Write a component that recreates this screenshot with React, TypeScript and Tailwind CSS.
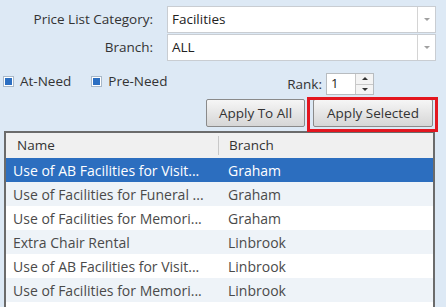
import React from 'react'

const rows = [
  { name: 'Use of AB Facilities for Visit...', branch: 'Graham' },
  { name: 'Use of Facilities for Funeral ...', branch: 'Graham' },
  { name: 'Use of Facilities for Memori...', branch: 'Graham' },
  { name: 'Extra Chair Rental', branch: 'Linbrook' },
  { name: 'Use of AB Facilities for Visit...', branch: 'Linbrook' },
  { name: 'Use of Facilities for Memori...', branch: 'Linbrook' },
  { name: 'Use of Facilities and Staff ...', branch: 'Linbrook' },
]

function Combo({ value }: { value: string }) {
  return (
    <div className="flex h-[27px] w-[269px] border border-[#c9cdd2] bg-white">
      <div className="flex-1 flex items-center pl-[4px] text-[13.5px] text-[#222]">{value}</div>
      <div className="w-[18px] border-l border-[#d4d4d4] flex items-center justify-center">
        <div className="w-0 h-0 border-l-[3px] border-r-[3px] border-t-[3px] border-l-transparent border-r-transparent border-t-[#a0a0a0]" />
      </div>
    </div>
  )
}

function Check({ label }: { label: string }) {
  return (
    <div className="flex items-center gap-[6px]">
      <div className="w-[11px] h-[11px] border border-[#a8b8c8] bg-white p-[1px]">
        <div className="w-full h-full bg-[#2c6fc2]" />
      </div>
      <span className="text-[13.5px] text-[#333]">{label}</span>
    </div>
  )
}

export default function App() {
  return (
    <div className="relative w-[446px] h-[307px] overflow-hidden bg-[#dde9f5] font-['Open_Sans','Lato',sans-serif] text-[#333]">
      <div className="pt-[6px] flex flex-col gap-[1px]">
        <div className="flex items-center">
          <div className="w-[153px] text-right text-[13.5px] text-[#333]">Price List Category:</div>
          <div className="ml-[14px]"><Combo value="Facilities" /></div>
        </div>
        <div className="flex items-center">
          <div className="w-[153px] text-right text-[13.5px] text-[#333]">Branch:</div>
          <div className="ml-[14px]"><Combo value="ALL" /></div>
        </div>
      </div>

      <div className="mt-[12px] h-[22px] flex pl-[3px]">
        <div className="flex items-center h-[16px]">
          <Check label="At-Need" />
          <div className="ml-[20px]"><Check label="Pre-Need" /></div>
        </div>
        <span className="ml-auto self-center text-[13.5px] text-[#333]">Rank:</span>
        <div className="ml-[4px] mr-[72px] flex h-[22px] w-[48px] border border-[#b8bcc0] bg-white">
          <div className="flex-1 pl-[4px] text-[13px] text-[#222] flex items-center">1</div>
          <div className="w-[18px] border-l border-[#c8c8c8] flex flex-col">
            <div className="flex-1 flex items-center justify-center border-b border-[#c8c8c8] bg-[#f4f4f4]">
              <div className="w-0 h-0 border-l-[3px] border-r-[3px] border-b-[3px] border-l-transparent border-r-transparent border-b-[#333]" />
            </div>
            <div className="flex-1 flex items-center justify-center bg-[#f4f4f4]">
              <div className="w-0 h-0 border-l-[3px] border-r-[3px] border-t-[3px] border-l-transparent border-r-transparent border-t-[#333]" />
            </div>
          </div>
        </div>
      </div>

      <div className="mt-[4px] flex justify-end gap-[8px] pr-[13px]">
        <button className="h-[28px] w-[99px] border border-[#8a8a8a] rounded-[2px] bg-gradient-to-b from-[#f6f6f6] to-[#d6d6d6] text-[13.5px] text-[#333]">Apply To All</button>
        <button className="h-[28px] w-[120px] border border-[#8a8a8a] rounded-[2px] bg-gradient-to-b from-[#f6f6f6] to-[#d6d6d6] text-[13.5px] text-[#333]">Apply Selected</button>
      </div>

      <div className="absolute left-[307px] top-[97px] w-[131px] h-[35px] border-[3px] border-[#e3161f] z-10" />

      <div className="mt-[4px] ml-[4px] w-[431px] border-2 border-[#6b6b6b] border-b-0 bg-white">
        <div className="flex h-[25px] bg-[#f0f0f0] text-[13.5px] text-[#333]">
          <div className="w-[213px] border-r border-[#c8c8c8] my-[3px] pl-[11px] flex items-center">Name</div>
          <div className="pl-[10px] flex items-center">Branch</div>
        </div>
        {rows.map((r, i) => (
          <div
            key={i}
            className={
              'flex h-[24px] items-center text-[14px] ' +
              (i === 0 ? 'bg-[#2c6ebf] text-white' : i % 2 === 1 ? 'bg-[#eef3f8] text-[#4a4a4a]' : 'bg-white text-[#4a4a4a]')
            }
          >
            <div className="w-[213px] pl-[7px] whitespace-nowrap">{r.name}</div>
            <div className="pl-[9px]">{r.branch}</div>
          </div>
        ))}
      </div>
    </div>
  )
}
